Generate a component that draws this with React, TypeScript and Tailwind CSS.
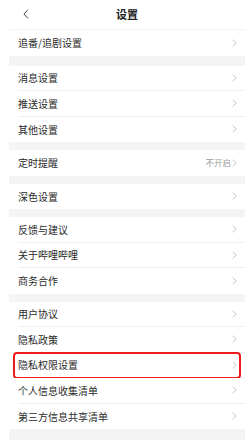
const groups: { label: string; value?: string }[][] = [
  [{ label: "追番/追剧设置" }],
  [{ label: "消息设置" }, { label: "推送设置" }, { label: "其他设置" }],
  [{ label: "定时提醒", value: "不开启" }],
  [{ label: "深色设置" }],
  [{ label: "反馈与建议" }, { label: "关于哔哩哔哩" }, { label: "商务合作" }],
  [
    { label: "用户协议" },
    { label: "隐私政策" },
    { label: "隐私权限设置" },
    { label: "个人信息收集清单" },
    { label: "第三方信息共享清单" },
  ],
];

function Chevron() {
  return (
    <svg width="5" height="8" viewBox="0 0 5 8" className="shrink-0">
      <path d="M0.8 0.6 L4.2 4 L0.8 7.4" fill="none" stroke="#bdbdbd" strokeWidth="0.9" />
    </svg>
  );
}

function Row({ label, value, last, hl }: { label: string; value?: string; last: boolean; hl: boolean }) {
  return (
    <div className="relative h-[25.5px] pl-[9px] bg-white">
      <div className={`flex h-full items-center pr-[8px] ${last ? "" : "border-b border-[#f0f0f0]"}`}>
        <span className="flex-1 text-[10px] text-[#2a2a2a]">{label}</span>
        {value && <span className="text-[8.5px] text-[#9a9a9a] mr-[1px]">{value}</span>}
        <Chevron />
      </div>
      {hl && (
        <div className="absolute left-[4px] right-[4px] top-[-1px] bottom-[-1px] border-2 border-[#f01c1c] rounded-[4px]" />
      )}
    </div>
  );
}

export default function App() {
  return (
    <div className="w-[250px] h-[440px] overflow-hidden bg-white" style={{ fontFamily: '"Noto Sans CJK SC", "Noto Sans", sans-serif' }}>
      <div className="ml-[9px] w-[236px]">
        {/* Header */}
        <div className="relative h-[30px] flex items-center justify-center border-b border-[#f3f3f3]">
          <svg width="6" height="10" viewBox="0 0 6 10" className="absolute left-[14px] top-[9px]">
            <path d="M5 0.7 L0.9 5 L5 9.3" fill="none" stroke="#444" strokeWidth="1" />
          </svg>
          <span className="text-[11px] font-bold text-[#222]">设置</span>
        </div>

        {groups.map((g, gi) => (
          <div key={gi}>
            {gi > 0 && <div className={`${gi === 1 ? "h-[10px]" : "h-[8px]"} bg-[#f4f4f4]`} />}
            {g.map((r, ri) => (
              <Row key={r.label} label={r.label} value={r.value} last={ri === g.length - 1} hl={r.label === "隐私权限设置"} />
            ))}
          </div>
        ))}
        <div className="h-[20px] bg-[#f4f4f4]" />
      </div>
    </div>
  );
}
